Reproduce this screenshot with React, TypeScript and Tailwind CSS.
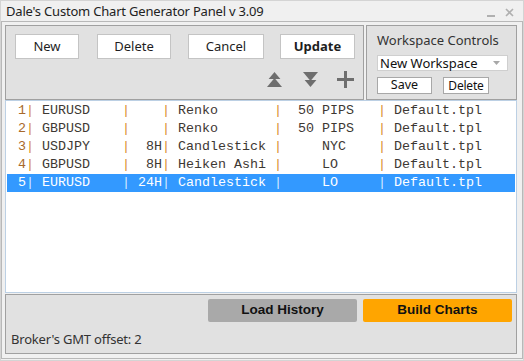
import React from "react";

const rows = [
  { n: "1", s: "EURUSD", tf: "", ct: "Renko", p: "  50 PIPS   " },
  { n: "2", s: "GBPUSD", tf: "", ct: "Renko", p: "  50 PIPS   " },
  { n: "3", s: "USDJPY", tf: "8H", ct: "Candlestick", p: "     NYC    " },
  { n: "4", s: "GBPUSD", tf: "8H", ct: "Heiken Ashi", p: "     LO     " },
  { n: "5", s: "EURUSD", tf: "24H", ct: "Candlestick", p: "     LO     " },
];

function Row({ r, selected }: { r: (typeof rows)[number]; selected: boolean }) {
  const parts = [
    r.s.padEnd(10),
    r.tf.padStart(4),
    " " + r.ct.padEnd(12),
    r.p,
    " Default.tpl",
  ];
  const pipe = selected ? "text-[#d6e9ff]" : "text-[#d98c2b]";
  return (
    <div
      className={`h-[18px] flex items-center pl-[11px] whitespace-pre font-['Liberation_Mono',monospace] text-[13.33px] leading-[18px] ${
        selected ? "bg-[#3399ff] text-white" : "text-[#3d3833]"
      }`}
    >
      <span className={selected ? "text-white" : "text-[#a8692a]"}>{r.n}</span>
      <span className={pipe}>|</span>
      <span> {parts[0]}</span>
      <span className={pipe}>|</span>
      <span>{parts[1]}</span>
      <span className={pipe}>|</span>
      <span>{parts[2]}</span>
      <span className={pipe}>|</span>
      <span>{parts[3]}</span>
      <span className={pipe}>|</span>
      <span>{parts[4]}</span>
    </div>
  );
}

function Btn({ label, w, bold }: { label: string; w: string; bold?: boolean }) {
  return (
    <div
      className={`${w} h-[25px] bg-white border border-[#c4c4c4] flex items-center justify-center text-[13px] text-[#1e1e1e] ${
        bold ? "font-bold" : ""
      }`}
    >
      {label}
    </div>
  );
}

export default function App() {
  return (
    <div className="w-[524px] h-[361px] bg-[#f0f0f0] border border-[#d4d4d4] flex flex-col font-['Noto_Sans',sans-serif] overflow-hidden">
      {/* title bar */}
      <div className="h-[20px] flex items-center pl-[5px] pr-[9px] shrink-0">
        <span className="text-[13px] text-[#222] leading-none tracking-[-0.2px]">
          Dale's Custom Chart Generator Panel v 3.09
        </span>
        <div className="ml-auto flex items-center gap-[10px]">
          <div className="w-[8px] h-[2px] bg-[#b0b0b0] mt-[9px]" />
          <svg width="9" height="9" viewBox="0 0 9 9" className="mt-[2px]">
            <path d="M1 1 L8 8 M8 1 L1 8" stroke="#b0b0b0" strokeWidth="1.6" />
          </svg>
        </div>
      </div>

      {/* frame */}
      <div className="h-[338px] border border-[#b8b8b8] pt-[3px] pl-[3px] pr-[5px] flex flex-col">
        {/* top panels */}
        <div className="h-[75px] flex gap-[2px] shrink-0">
          <div className="w-[359px] bg-[#e1e1e1] border border-[#a0a0a0] flex flex-col">
            <div className="flex items-start pt-[8px] pl-[9px]">
              <Btn label="New" w="w-[64px]" />
              <div className="w-[18px]" />
              <Btn label="Delete" w="w-[74px]" />
              <div className="w-[17px]" />
              <Btn label="Cancel" w="w-[76px]" />
              <div className="w-[16px]" />
              <Btn label="Update" w="w-[75px]" bold />
            </div>
            <div className="flex items-center pl-[261px] pt-[12px]">
              <svg width="15" height="15" viewBox="0 0 14 14">
                <polygon points="7,0 12.5,6.5 1.5,6.5" fill="#6e6e6e" />
                <polygon points="7,5.5 14,14 0,14" fill="#6e6e6e" />
              </svg>
              <div className="w-[21px]" />
              <svg width="15" height="15" viewBox="0 0 14 14">
                <polygon points="0,0 14,0 7,8.5" fill="#6e6e6e" />
                <polygon points="1.5,7.5 12.5,7.5 7,14" fill="#6e6e6e" />
              </svg>
              <div className="w-[19px]" />
              <svg width="17" height="17" viewBox="0 0 17 17">
                <rect x="0" y="7" width="17" height="3" fill="#6e6e6e" />
                <rect x="7" y="0" width="3" height="17" fill="#6e6e6e" />
              </svg>
            </div>
          </div>
          <div className="w-[151px] bg-[#e1e1e1] border border-[#a0a0a0] flex flex-col pl-[10px]">
            <div className="mt-[5px] h-[18px] flex items-center text-[13px] text-[#333] leading-none">
              Workspace Controls
            </div>
            <div className="mt-[6px] w-[131px] h-[16px] bg-white border border-[#cfcfcf] flex items-center pl-[2px] pr-[7px]">
              <span className="text-[13px] text-[#111] leading-none">New Workspace</span>
              <svg width="7" height="4" viewBox="0 0 7 4" className="ml-auto">
                <polygon points="0,0 7,0 3.5,4" fill="#a8a8a8" />
              </svg>
            </div>
            <div className="mt-[6px] flex gap-[11px]">
              <div className="w-[55px] h-[17px] bg-white border border-[#a8a8a8] flex items-center justify-center text-[12.5px] text-[#111] leading-none">
                Save
              </div>
              <div className="w-[46px] h-[17px] bg-white border border-[#a8a8a8] flex items-center justify-center text-[12px] tracking-[-0.2px] text-[#111] leading-none">
                Delete
              </div>
            </div>
          </div>
        </div>

        {/* list */}
        <div className="h-[193px] bg-white border border-[#bcd0e4] p-[1px] shrink-0">
          {rows.map((r, i) => (
            <Row key={i} r={r} selected={i === 4} />
          ))}
        </div>

        <div className="h-[1px] shrink-0" />

        {/* bottom panel */}
        <div className="h-[60px] bg-[#e1e1e1] border border-[#a0a0a0] flex flex-col shrink-0">
          <div className="flex justify-end gap-[6px] pt-[4px] pr-[4px]">
            <div className="w-[149px] h-[23px] bg-[#a9a9a9] rounded-[2px] flex items-center justify-center font-['Liberation_Sans',sans-serif] font-bold text-[13.5px] text-[#111]">
              Load History
            </div>
            <div className="w-[149px] h-[23px] bg-[#ffa500] rounded-[2px] flex items-center justify-center font-['Liberation_Sans',sans-serif] font-bold text-[13.5px] text-[#111]">
              Build Charts
            </div>
          </div>
          <div className="pl-[5px] mt-[11px] text-[13px] tracking-[-0.2px] text-[#333] leading-none">
            Broker's GMT offset: 2
          </div>
        </div>
      </div>
    </div>
  );
}
